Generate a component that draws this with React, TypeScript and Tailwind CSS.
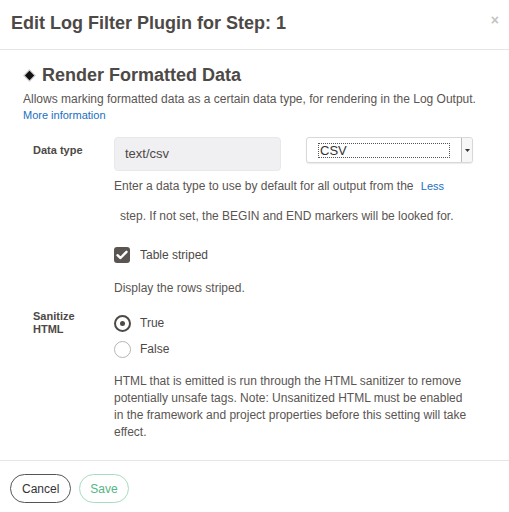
import React, { useState } from 'react';

const font = { fontFamily: '"Liberation Sans", Arial, sans-serif' };

export default function App() {
  const [sanitize, setSanitize] = useState(true);
  const [striped, setStriped] = useState(true);

  return (
    <div className="w-[509px] h-[512px] bg-white text-[#5a5552] overflow-hidden" style={font}>
      {/* Header */}
      <div className="h-[50px] border-b border-[#e6e6e6] flex items-start justify-between pl-[11px] pr-[10px] pt-[11px]">
        <h1 className="text-[18px] leading-[24px] font-bold text-[#4d4946]">Edit Log Filter Plugin for Step: 1</h1>
        <button className="text-[#c4c4c4] text-[14px] font-bold leading-none mt-[2px]">×</button>
      </div>

      {/* Body */}
      <div className="pl-[23px] pr-[20px] pt-[13px] h-[411px] border-b border-[#e6e6e6]">
        <div className="flex items-center gap-[6px]">
          <svg width="13" height="13" viewBox="0 0 13 13" className="shrink-0">
            <path d="M6.5 0 L13 6.5 L6.5 13 L0 6.5 Z" fill="#cfcfcf" />
            <path d="M6.5 1.8 L11.2 6.5 L6.5 11.2 L1.8 6.5 Z" fill="#111" />
          </svg>
          <h2 className="text-[18px] leading-[24px] font-bold text-[#4d4946]">Render Formatted Data</h2>
        </div>
        <p className="text-[12px] leading-[16px] mt-[4px]">
          Allows marking formatted data as a certain data type, for rendering in the Log Output.
        </p>
        <a className="text-[11px] leading-[16px] text-[#1a6fc0] block">More information</a>

        {/* Data type */}
        <div className="flex mt-[14px]">
          <div className="w-[91px] pl-[10px] pt-[5px] text-[11px] font-bold text-[#4d4946]">Data type</div>
          <div className="flex-1">
            <div className="flex items-start gap-[25px]">
              <div className="w-[167px] h-[34px] rounded-[4px] bg-[#f0eff2] border border-[#e8e7ea] flex items-center pl-[10px] text-[13px] text-[#4d4946]">
                text/csv
              </div>
              <div className="w-[167px] h-[26px] rounded-[3px] border border-[#d8d8d8] bg-white flex items-stretch shadow-[0_1px_1px_rgba(0,0,0,0.08)]">
                <div className="flex-1 flex items-center pl-[11px] pr-[11px]">
                  <div className="w-full h-[15px] border border-dotted border-[#555] flex items-center pl-[1px] text-[13px] text-[#333] leading-none">
                    CSV
                  </div>
                </div>
                <div className="w-[11px] border-l border-[#bbb] flex items-center justify-center bg-[#f7f7f7] rounded-r-[3px]">
                  <svg width="5" height="3" viewBox="0 0 5 3">
                    <path d="M0 0 L5 0 L2.5 3 Z" fill="#333" />
                  </svg>
                </div>
              </div>
            </div>
            <div className="text-[12px] leading-[16px] mt-[7px]">
              Enter a data type to use by default for all output from the{' '}
              <a className="text-[11px] text-[#1a6fc0] ml-[4px]">Less</a>
            </div>
            <div className="text-[12px] leading-[16px] mt-[14px] pl-[6px]">
              step. If not set, the BEGIN and END markers will be looked for.
            </div>

            <label className="flex items-center gap-[10px] mt-[22px] cursor-pointer" onClick={() => setStriped(!striped)}>
              <span className="w-[16px] h-[16px] rounded-[3px] bg-[#5b5552] flex items-center justify-center">
                {striped && (
                  <svg width="12" height="10" viewBox="0 0 12 10">
                    <path d="M1.5 5.2 L4.5 8 L10.5 1.8" stroke="#fff" strokeWidth="2.4" fill="none" strokeLinecap="round" strokeLinejoin="round" />
                  </svg>
                )}
              </span>
              <span className="text-[12px] text-[#4d4946]">Table striped</span>
            </label>
            <p className="text-[12px] leading-[16px] mt-[16px]">Display the rows striped.</p>
          </div>
        </div>

        {/* Sanitize HTML */}
        <div className="flex mt-[17px]">
          <div className="w-[91px] pl-[10px] -mt-[3px] text-[11px] leading-[13px] font-bold text-[#4d4946]">
            <div>Sanitize</div>
            <div>HTML</div>
          </div>
          <div className="flex-1">
            <div className="flex flex-col gap-[8px] pt-[1px]">
              {[
                { label: 'True', value: true },
                { label: 'False', value: false },
              ].map((o) => (
                <label key={o.label} className="flex items-center gap-[9px] cursor-pointer" onClick={() => setSanitize(o.value)}>
                  <span
                    className={
                      sanitize === o.value
                        ? 'w-[17px] h-[17px] rounded-full border-[2px] border-[#4d4946] flex items-center justify-center'
                        : 'w-[17px] h-[17px] rounded-full border border-[#b5b5b5]'
                    }
                  >
                    {sanitize === o.value && <span className="w-[5px] h-[5px] rounded-full bg-[#4d4946]" />}
                  </span>
                  <span className="text-[12px] text-[#4d4946]">{o.label}</span>
                </label>
              ))}
            </div>
            <p className="text-[12px] leading-[17px] mt-[15px] pr-[20px]">
              HTML that is emitted is run through the HTML sanitizer to remove potentially unsafe tags. Note: Unsanitized HTML must be enabled in the framework and project properties before this setting will take effect.
            </p>
          </div>
        </div>
      </div>

      {/* Footer */}
      <div className="flex gap-[8px] pl-[10px] pt-[13px]">
        <button className="h-[29px] px-[11px] rounded-full border border-[#555] text-[12px] text-[#333]">Cancel</button>
        <button className="h-[29px] px-[10px] rounded-full border border-[#a8dcc0] text-[12px] text-[#55b585]">Save</button>
      </div>
    </div>
  );
}
